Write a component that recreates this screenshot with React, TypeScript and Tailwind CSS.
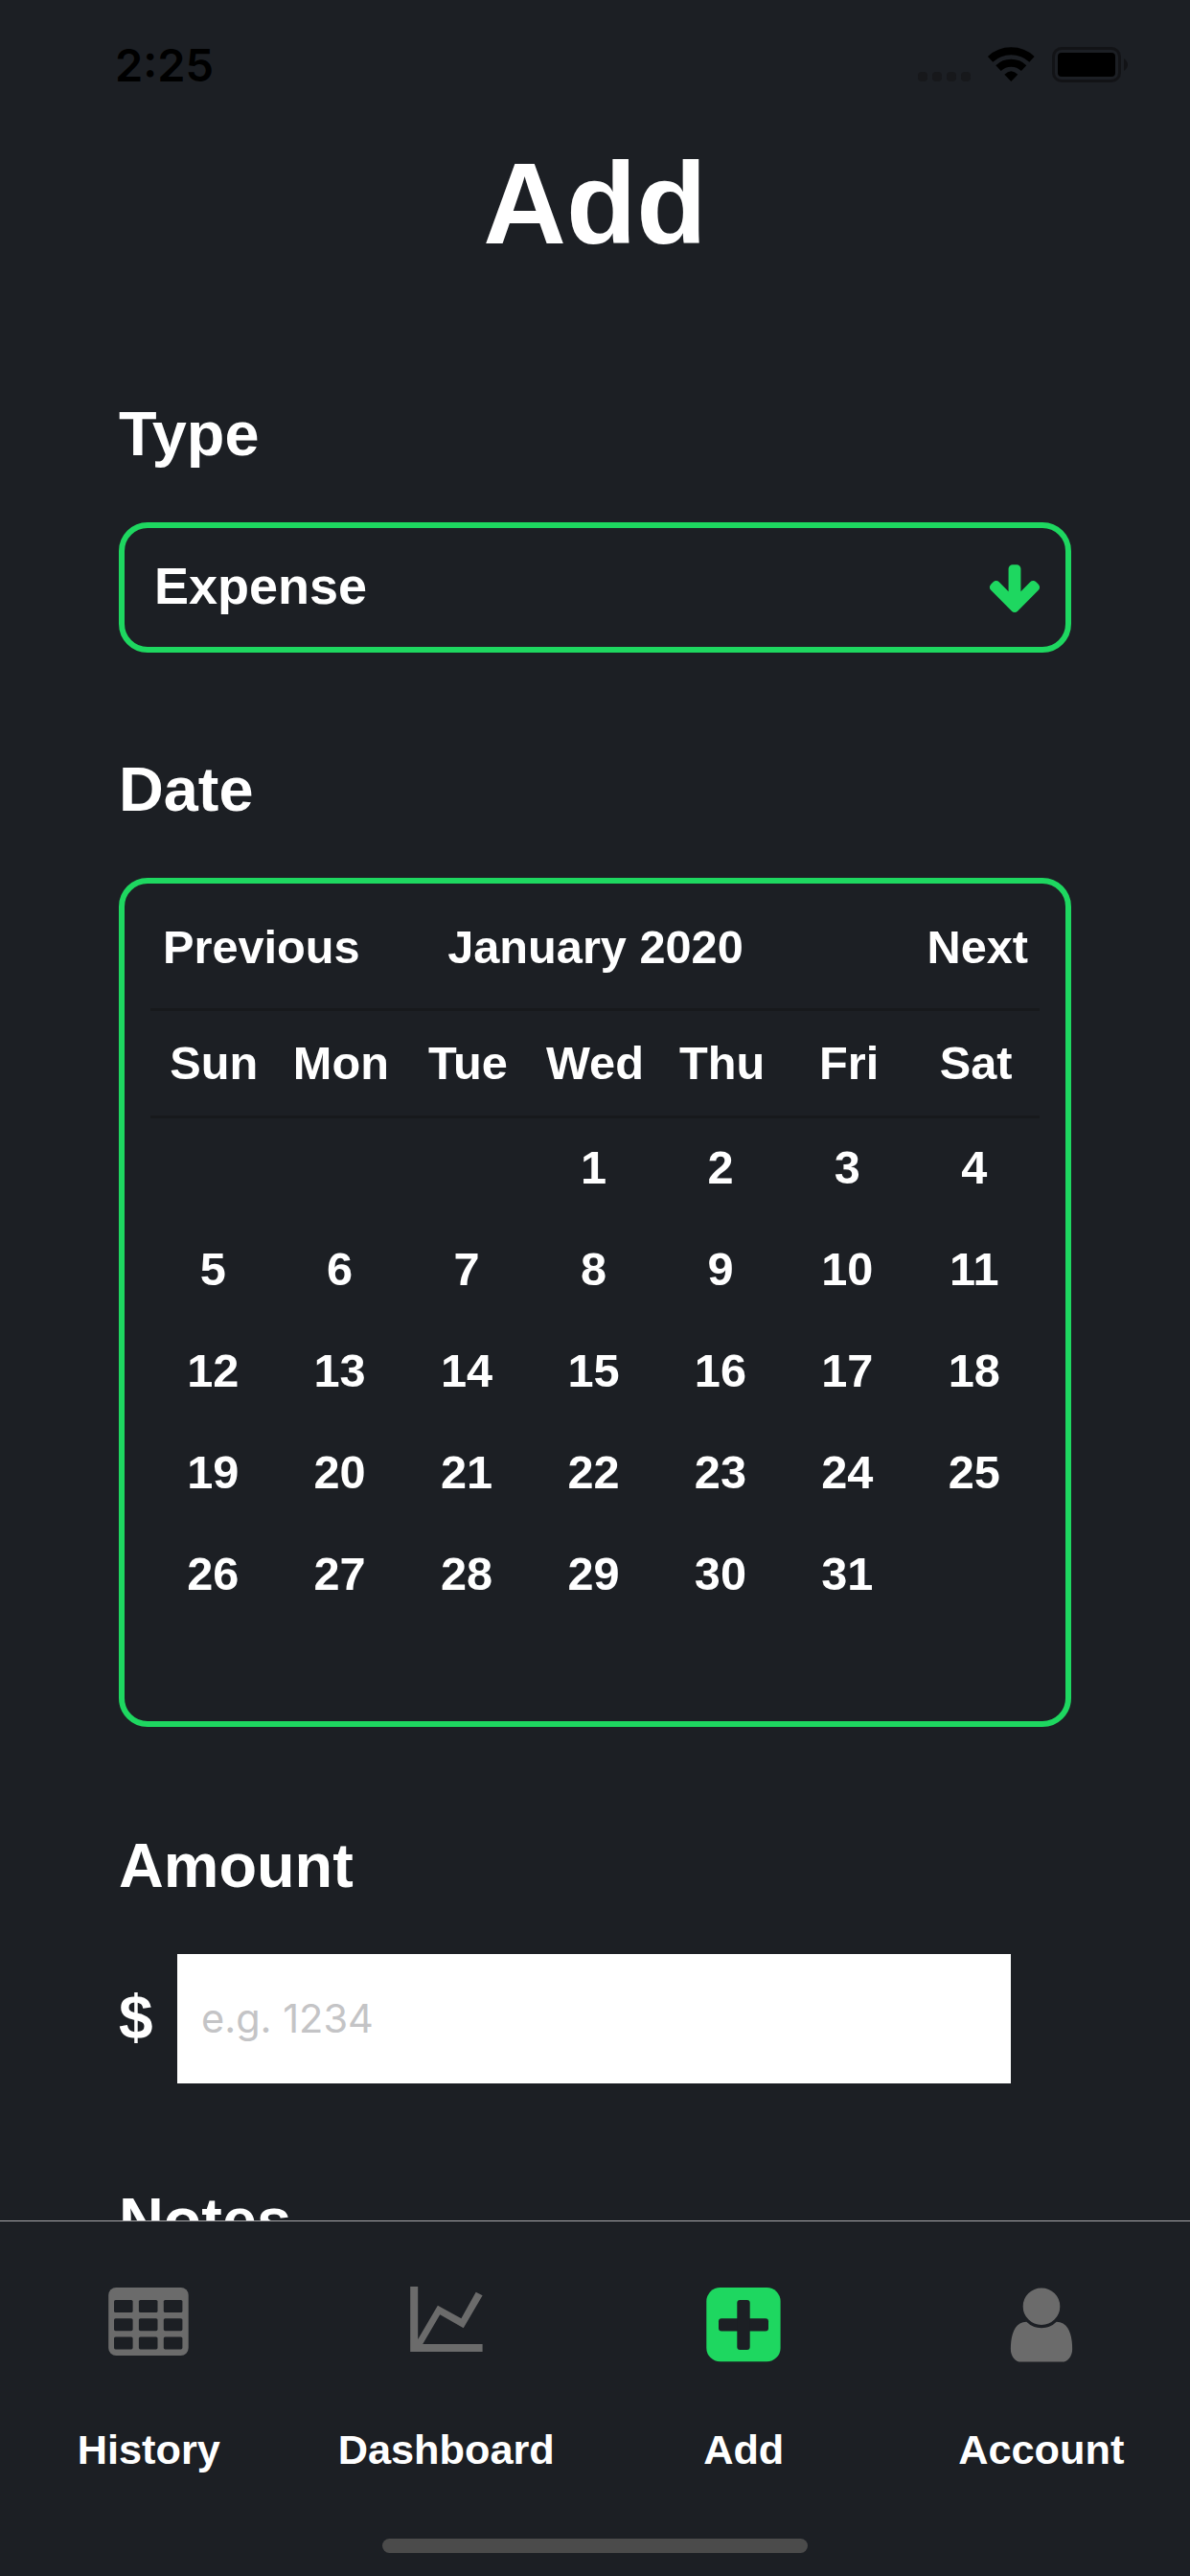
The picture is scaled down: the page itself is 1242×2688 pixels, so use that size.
import React from "react";

const WEEKDAYS = ["Sun", "Mon", "Tue", "Wed", "Thu", "Fri", "Sat"];
const LEADING_BLANKS = 3;
const CELLS: (number | null)[] = [
  ...Array.from({ length: LEADING_BLANKS }, () => null),
  ...Array.from({ length: 31 }, (_, i) => i + 1),
];

function StatusBar() {
  return (
    <header className="flex h-[132px] shrink-0 items-start justify-between pt-[38px] pr-[64px] pl-[120px] text-black">
      <span className="font-['Inter'] text-[47px] leading-[60px] font-semibold">2:25</span>
      <svg width="220" height="60" viewBox="0 0 220 60" fill="none">
        <g fill="#17181b">
          <rect x="0" y="37" width="10" height="10" rx="4" />
          <rect x="15" y="37" width="10" height="10" rx="4" />
          <rect x="30" y="37" width="10" height="10" rx="4" />
          <rect x="45" y="37" width="10" height="10" rx="4" />
        </g>
        <g stroke="#000" strokeWidth="7.8">
          <path d="M75.6 23.8A31.8 31.8 0 0 1 119 23.8" />
          <path d="M84 33.1A19.2 19.2 0 0 1 110.6 33.1" />
        </g>
        <path d="M97.3 47L90.3 39.8Q97.3 32.6 104.3 39.8Z" fill="#000" />
        <rect x="141.5" y="12.5" width="69" height="34" rx="8.5" stroke="#121316" strokeWidth="3" />
        <rect x="146" y="17" width="60" height="25" rx="4" fill="#000" />
        <path d="M215 23Q219 26 219 29.5T215 36Z" fill="#121316" />
      </svg>
    </header>
  );
}

function ArrowDown() {
  return (
    <svg width="60" height="60" viewBox="0 0 1792 1792" fill="#1ed760" className="mt-[4px]">
      <path d="M1675 832q0 53-37 90l-651 652q-39 37-91 37-53 0-90-37l-651-652q-38-36-38-90 0-53 38-91l74-75q39-37 91-37 53 0 90 37l294 294v-704q0-52 38-90t90-38h128q52 0 90 38t38 90v704l294-294q37-37 90-37 52 0 91 37l75 75q37 39 37 91z" />
    </svg>
  );
}

function TableIcon() {
  return (
    <svg width="84" height="90" viewBox="0 0 84 90">
      <rect x="0.2" y="6" width="83.5" height="71" rx="8" fill="#6b6b6b" />
      <g fill="#1c1f24">
        {[19, 38.2, 57.4].map((y) =>
          [6, 31.9, 57.8].map((x) => <rect key={`${x}-${y}`} x={x} y={y} width="19.6" height="13" rx="1.6" />),
        )}
      </g>
    </svg>
  );
}

function ChartIcon() {
  return (
    <svg width="76" height="90" viewBox="0 0 76 90">
      <path
        transform="translate(0.2 5)"
        fill="#6b6b6b"
        d="M0 0H8V55L28.7 19.7L53.2 33.3L68.5 5.7L75.4 9.3L55.5 43.3L31 29.3L13 60H75.4V68H0Z"
      />
    </svg>
  );
}

function PlusIcon() {
  return (
    <svg width="78" height="90" viewBox="0 0 78 90">
      <rect x="0.3" y="6" width="77.3" height="77.3" rx="14.4" fill="#1ed760" />
      <g fill="#1c1f24">
        <rect x="13" y="38.2" width="52" height="13.4" rx="3" />
        <rect x="32.3" y="19" width="13.4" height="52" rx="3" />
      </g>
    </svg>
  );
}

function UserIcon() {
  return (
    <svg width="90" height="90" viewBox="0 0 1792 1792" fill="#6b6b6b">
      <path d="M1536 1399q0 109-62.5 187t-150.5 78h-854q-88 0-150.5-78t-62.5-187q0-85 8.5-160.5t31.5-152 58.5-131 94-89 134.5-34.5q131 128 313 128t313-128q76 0 134.5 34.5t94 89 58.5 131 31.5 152 8.5 160.5zm-256-887q0 159-112.5 271.5t-271.5 112.5-271.5-112.5-112.5-271.5 112.5-271.5 271.5-112.5 271.5 112.5 112.5 271.5z" />
    </svg>
  );
}

function Section({ title, children }: { title: string; children?: React.ReactNode }) {
  return (
    <section className="mb-[105px]">
      <h2 className="mb-[55px] text-[64.8px] leading-[75px]">{title}</h2>
      {children}
    </section>
  );
}

function Calendar() {
  return (
    <div className="mb-[107px] h-[886px] rounded-[30px] border-[6px] border-[#1ed760] px-[27px] text-[48.7px] leading-[60px]">
      <div className="grid h-[133px] grid-cols-[1fr_auto_1fr] items-center border-b-[3px] border-[#17191c] pt-[2px] pr-[12px] pl-[13px]">
        <button className="text-left font-bold">Previous</button>
        <span>January 2020</span>
        <button className="text-right font-bold">Next</button>
      </div>
      <div className="grid h-[112px] grid-cols-7 items-center border-b-[3px] border-[#17191c] pb-[2px] text-center">
        {WEEKDAYS.map((day) => (
          <span key={day}>{day}</span>
        ))}
      </div>
      <div className="-mt-[2px] mr-[2px] -ml-[1px] grid auto-rows-[106px] grid-cols-7 items-center text-center">
        {CELLS.map((day, i) => (
          <span key={i}>{day}</span>
        ))}
      </div>
    </div>
  );
}

const TABS = [
  { label: "History", icon: <TableIcon /> },
  { label: "Dashboard", icon: <ChartIcon /> },
  { label: "Add", icon: <PlusIcon /> },
  { label: "Account", icon: <UserIcon /> },
];

export default function App() {
  return (
    <div className="flex h-[2688px] w-[1242px] flex-col overflow-hidden bg-[#1c1f24] font-['Liberation_Sans',Arial,sans-serif] font-bold text-white">
      <StatusBar />
      <main className="min-h-0 flex-1 overflow-hidden">
        <h1 className="mb-[123px] text-center text-[120px] leading-[160px]">Add</h1>
        <div className="px-[124px]">
          <Section title="Type">
            <div className="flex h-[136px] items-center justify-between rounded-[30px] border-[6px] border-[#1ed760] pr-[23px] pl-[31px]">
              <span className="pb-[4px] text-[54px] leading-[60px]">Expense</span>
              <ArrowDown />
            </div>
          </Section>
          <Section title="Date">
            <Calendar />
          </Section>
          <Section title="Amount">
            <div className="flex h-[135px] items-center">
              <span className="w-[61px] pb-[3px] text-[64px] leading-[75px]">$</span>
              <input
                className="h-[135px] w-[870px] bg-white pr-6 pb-[2px] pl-[25px] font-['Inter'] text-[41.5px] font-normal text-black placeholder:text-[#c4c4c6]"
                placeholder="e.g. 1234"
              />
            </div>
          </Section>
          <Section title="Notes" />
        </div>
      </main>
      <nav className="flex h-[371px] shrink-0 flex-col items-center border-t border-[#a7a7aa]">
        <div className="grid w-full grid-cols-4 pt-[63px]">
          {TABS.map(({ label, icon }) => (
            <button key={label} className="flex flex-col items-center gap-[55px] text-[43.3px] leading-[60px] font-bold">
              {icon}
              {label}
            </button>
          ))}
        </div>
        <div className="mt-[63px] h-[15px] w-[444px] rounded-full bg-[#4b4b4b]" />
      </nav>
    </div>
  );
}
